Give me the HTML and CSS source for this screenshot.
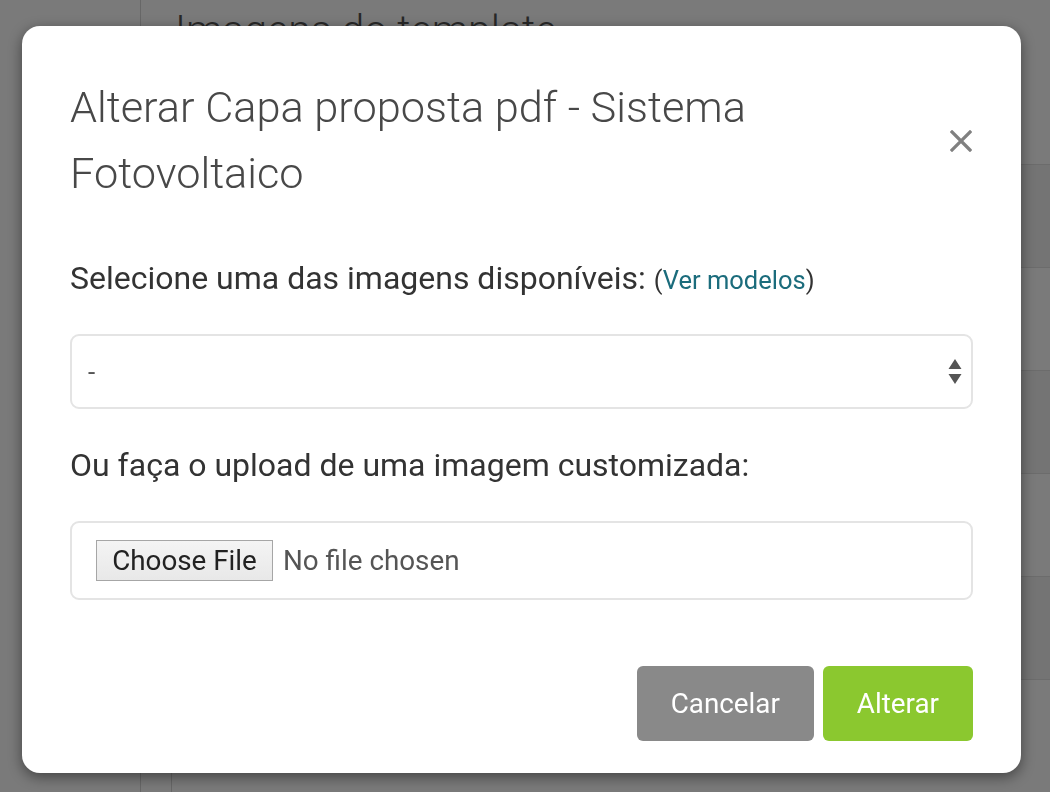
FILE: index.html
```html
<!DOCTYPE html>
<html lang="pt">
<head>
<meta charset="utf-8">
<title>Alterar Capa</title>
<link rel="stylesheet" href="styles.css">
</head>
<body>
<div class="page">
  <aside class="sidebar"></aside>
  <main class="main">
    <h1 class="page-title">Imagens do template</h1>
    <div class="table">
      <div class="row row-head"></div>
      <div class="row odd"></div>
      <div class="row"></div>
      <div class="row odd"></div>
      <div class="row"></div>
      <div class="row odd"></div>
      <div class="row"></div>
    </div>
  </main>
</div>
<div class="overlay"></div>
<div class="modal">
  <div class="modal-header">
    <h2 class="modal-title">Alterar Capa proposta pdf - Sistema Fotovoltaico</h2>
    <button class="close" type="button" aria-label="Fechar">
      <svg width="22" height="22" viewBox="0 0 22 22"><path d="M2 2 L20 20 M20 2 L2 20" stroke="#808080" stroke-width="3.2" stroke-linecap="square"/></svg>
    </button>
  </div>
  <label class="field-label">Selecione uma das imagens disponíveis: <span class="small">(<a class="link" href="#">Ver modelos</a>)</span></label>
  <div class="select">
    <span class="select-value">-</span>
    <span class="arrows">
      <svg width="14" height="26" viewBox="0 0 14 26"><path d="M7 0 L13.5 10 L0.5 10 Z M0.5 15 L13.5 15 L7 25 Z" fill="#555"/></svg>
    </span>
  </div>
  <label class="field-label">Ou faça o upload de uma imagem customizada:</label>
  <div class="file-box">
    <span class="file-btn">Choose File</span>
    <span class="file-name">No file chosen</span>
  </div>
  <div class="modal-footer">
    <button class="btn btn-cancel" type="button">Cancelar</button>
    <button class="btn btn-ok" type="button">Alterar</button>
  </div>
</div>
</body>
</html>
```

FILE: styles.css
```css
html, body {
  margin: 0;
  padding: 0;
  height: 100%;
  overflow: hidden;
  font-family: Roboto, "Liberation Sans", sans-serif;
  background: #fff;
}

.page {
  display: flex;
  height: 792px;
}

.sidebar {
  width: 140px;
  border-right: 1px solid #d8d8d8;
  flex: none;
}

.main {
  flex: 1;
  padding-left: 30px;
  display: flex;
  flex-direction: column;
}

.page-title {
  margin: 0 0 0 4px;
  padding-top: 0;
  font-weight: 300;
  font-size: 41px;
  line-height: 60px;
  color: #555;
  height: 165px;
}

.table {
  border-left: 1px solid #d8d8d8;
  flex: 1;
  margin-top: -1px;
}

.row {
  height: 102px;
  border-top: 1px solid #e2e2e2;
}

.row-head {
  height: 0;
  border-top: none;
}

.row.odd {
  background: #f2f2f2;
}

.overlay {
  position: fixed;
  inset: 0;
  background: rgba(0, 0, 0, 0.52);
}

.modal {
  position: absolute;
  left: 22px;
  top: 26px;
  width: 999px;
  height: 747px;
  box-sizing: border-box;
  background: #fff;
  border-radius: 18px;
  box-shadow: 0 4px 14px rgba(0, 0, 0, 0.45);
  padding: 49px 48px 32px 48px;
  display: flex;
  flex-direction: column;
}

.modal-header {
  display: flex;
  align-items: center;
  justify-content: space-between;
}

.modal-title {
  margin: 0;
  font-weight: 300;
  font-size: 43.3px;
  line-height: 66px;
  color: #484848;
  max-width: 820px;
}

.close {
  border: none;
  background: none;
  padding: 0;
  margin-right: 1px;
  width: 22px;
  height: 22px;
  display: flex;
}

.field-label {
  display: block;
  font-size: 32px;
  line-height: 40px;
  color: #333;
  margin-top: 51px;
}

.small {
  font-size: 25.5px;
}

.link {
  color: #1b6c7c;
  text-decoration: none;
}

.select {
  margin-top: 34px;
  height: 75px;
  box-sizing: border-box;
  border: 2px solid #e4e4e4;
  border-radius: 9px;
  display: flex;
  align-items: center;
  justify-content: space-between;
  padding: 0 8px 0 16px;
  font-size: 26px;
  color: #555;
}

.arrows {
  display: flex;
  margin-top: 1px;
  margin-right: 1px;
}

.select + .field-label {
  margin-top: 36px;
}

.file-box {
  margin-top: 36px;
  height: 79px;
  box-sizing: border-box;
  border: 2px solid #e4e4e4;
  border-radius: 9px;
  display: flex;
  align-items: center;
  padding: 0 24px;
  gap: 10px;
  font-size: 27.8px;
}

.file-btn {
  width: 177px;
  height: 41px;
  box-sizing: border-box;
  border: 1px solid #a6a6a6;
  background: linear-gradient(#f4f4f4, #e8e8e8);
  color: #222;
  display: flex;
  align-items: center;
  justify-content: center;
}

.file-name {
  color: #555;
}

.modal-footer {
  margin-top: auto;
  display: flex;
  justify-content: flex-end;
  gap: 9px;
}

.btn {
  height: 75px;
  border: none;
  border-radius: 6px;
  color: #fff;
  font-family: Roboto, "Liberation Sans", sans-serif;
  font-size: 27.8px;
  padding: 0 34px;
}

.btn-cancel {
  background: #898989;
}

.btn-ok {
  background: #8bc82f;
}
```
